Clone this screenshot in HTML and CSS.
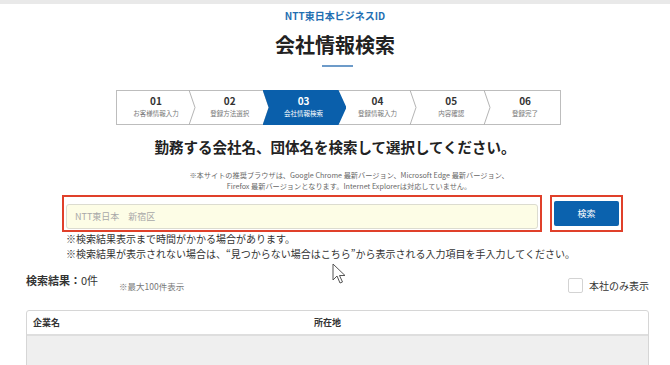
FILE: index.html
```html
<!DOCTYPE html>
<html lang="ja">
<head>
    <meta charset="UTF-8">
    <meta name="viewport" content="width=device-width, initial-scale=1.0">
    <title>会社情報検索</title>
    <link rel="stylesheet" href="styles.css">
</head>
<body>
    <div class="topbar"></div>

    <div class="brand">NTT東日本ビジネスID</div>
    <h1 class="title">会社情報検索</h1>
    <div class="rule"></div>

    <!-- ステップ表示 -->
    <div class="steps">
        <div class="step">
            <div class="num">01</div><div class="label">お客様情報入力</div>
            <svg class="sep" viewBox="0 0 6 35" preserveAspectRatio="none"><polyline points="0,0 6,17.5 0,35"/></svg>
        </div>
        <div class="step">
            <div class="num">02</div><div class="label">登録方法選択</div>
            <svg class="sep" viewBox="0 0 6 35" preserveAspectRatio="none"><polyline points="0,0 6,17.5 0,35"/></svg>
        </div>
        <div class="step active">
            <div class="num">03</div><div class="label">会社情報検索</div>
        </div>
        <div class="step">
            <div class="num">04</div><div class="label">登録情報入力</div>
            <svg class="sep" viewBox="0 0 6 35" preserveAspectRatio="none"><polyline points="0,0 6,17.5 0,35"/></svg>
        </div>
        <div class="step">
            <div class="num">05</div><div class="label">内容確認</div>
            <svg class="sep" viewBox="0 0 6 35" preserveAspectRatio="none"><polyline points="0,0 6,17.5 0,35"/></svg>
        </div>
        <div class="step">
            <div class="num">06</div><div class="label">登録完了</div>
        </div>
    </div>

    <h2 class="lead">勤務する会社名、団体名を検索して選択してください。</h2>
    <p class="browser-note">※本サイトの推奨ブラウザは、Google Chrome 最新バージョン、Microsoft Edge 最新バージョン、<br>Firefox 最新バージョンとなります。Internet Explorerは対応していません。</p>

    <!-- 検索フォーム -->
    <div class="search-row">
        <div class="mark mark-input">
            <input class="search-input" type="text" placeholder="NTT東日本　新宿区">
        </div>
        <div class="mark mark-btn">
            <button class="search-btn">検索</button>
        </div>
    </div>
    <div class="search-notes">
        <p>※検索結果表示まで時間がかかる場合があります。</p>
        <p>※検索結果が表示されない場合は、“見つからない場合は<span class="link">こちら</span>”から表示される入力項目を手入力してください。</p>
    </div>

    <div class="results">
        <div class="results-head">
            <div class="count"><b>検索結果：</b>0件</div>
            <div class="max">※最大100件表示</div>
            <label class="only-hq"><span class="checkbox"></span>本社のみ表示</label>
        </div>
        <div class="table">
            <div class="table-head">
                <div class="col-name">企業名</div>
                <div class="col-addr">所在地</div>
            </div>
            <div class="table-body"></div>
        </div>
    </div>

    <!-- マウスカーソル -->
    <svg class="cursor" width="14" height="22" viewBox="0 0 14 22">
        <path d="M1 1 L1 17 L5 13 L8 20 L10.5 19 L7.5 12.5 L13 12.5 Z" fill="#fff" stroke="#555" stroke-width="1" stroke-linejoin="round"/>
    </svg>
</body>
</html>
```

FILE: styles.css
```css
body {
    margin: 0;
    font-family: "Noto Sans CJK JP", "Noto Sans", sans-serif;
    color: #333;
    background-color: #fff;
    position: relative;
    overflow: hidden;
}
p {
    margin: 0;
}
.topbar {
    height: 4px;
    background-color: #e9e9e9;
}
.brand {
    margin-top: 5px;
    text-align: center;
    font-size: 10px;
    line-height: 14px;
    font-weight: bold;
    color: #1f6fb2;
}
.title {
    margin: 8px 0 0;
    text-align: center;
    font-size: 20px;
    line-height: 28px;
    font-weight: bold;
    color: #222;
}
.rule {
    width: 31px;
    height: 2px;
    margin: 6px 0 0 322px;
    background-color: #6d9bc9;
}

/* steps */
.steps {
    display: flex;
    width: 445px;
    height: 35px;
    margin: 23px 0 0 116px;
    border: 1px solid #bdbdbd;
    box-sizing: border-box;
}
.step {
    flex: 1;
    position: relative;
    text-align: center;
    padding-left: 4px;
}
.num {
    position: relative;
    z-index: 2;
    margin-top: 4px;
    font-size: 10px;
    line-height: 12px;
    font-weight: bold;
    color: #333;
}
.label {
    position: relative;
    z-index: 2;
    font-size: 6.5px;
    line-height: 12px;
    color: #777;
}
.sep {
    position: absolute;
    top: -1px;
    right: -4px;
    width: 6px;
    height: 35px;
    overflow: visible;
    z-index: 1;
}
.sep polyline {
    fill: none;
    stroke: #b5b5b5;
    stroke-width: 1;
}
.step.active::before {
    content: "";
    position: absolute;
    top: -1px;
    bottom: -1px;
    left: -2px;
    right: -8px;
    background-color: #0a5fab;
    clip-path: polygon(0 0, calc(100% - 8px) 0, 100% 50%, calc(100% - 8px) 100%, 0 100%, 6px 50%);
    z-index: 1;
}
.step.active .num,
.step.active .label {
    color: #fff;
}

.lead {
    margin: 12px 0 0;
    text-align: center;
    font-size: 14.5px;
    line-height: 20px;
    font-weight: bold;
    color: #222;
}
.browser-note {
    margin-top: 13px;
    padding-left: 28px;
    text-align: center;
    font-size: 7.2px;
    line-height: 11px;
    color: #666;
}

/* search */
.search-row {
    display: flex;
    gap: 8px;
    margin: 3px 0 0 62px;
}
.mark {
    border: 2px solid #e0402a;
    box-sizing: border-box;
    height: 37px;
    padding: 4px 2px;
}
.mark-input {
    width: 480px;
}
.mark-btn {
    width: 73px;
    padding-top: 4px;
}
.search-input {
    width: 100%;
    height: 25px;
    box-sizing: border-box;
    border: 1px solid #dcdcd0;
    border-radius: 3px;
    background-color: #fdfde6;
    padding: 0 8px;
    font-family: inherit;
    font-size: 9px;
    outline: none;
}
.search-input::placeholder {
    color: #a8a8a8;
}
.search-btn {
    display: block;
    width: 65px;
    height: 25px;
    margin: 0 auto;
    border: none;
    border-radius: 2px;
    background-color: #0b62ae;
    color: #fff;
    font-family: inherit;
    font-size: 9px;
}
.search-notes {
    margin-left: 66px;
    font-size: 10px;
    line-height: 14.5px;
    color: #333;
}

/* results */
.results {
    padding: 0 21px 0 26px;
}
.results-head {
    display: flex;
    align-items: flex-start;
    height: 20px;
    margin-top: 11px;
}
.count {
    font-size: 11px;
    line-height: 16px;
}
.max {
    margin: 8px 0 0 21px;
    font-size: 8.5px;
    line-height: 12px;
    color: #777;
}
.only-hq {
    display: flex;
    align-items: center;
    gap: 6px;
    margin: 6px 0 0 auto;
    font-size: 10px;
    line-height: 14px;
}
.checkbox {
    width: 13px;
    height: 13px;
    border: 1px solid #d3d3d3;
    border-radius: 2px;
    background-color: #fff;
}
.table {
    margin-top: 18px;
    border: 1px solid #d6d6d6;
    border-radius: 3px;
}
.table-head {
    display: flex;
    height: 23px;
    align-items: center;
    padding-left: 6px;
    border-bottom: 2px solid #dedede;
    font-size: 9px;
    font-weight: bold;
}
.col-name {
    width: 281px;
}
.table-body {
    height: 60px;
    background-color: #efefef;
}
.cursor {
    position: absolute;
    left: 332px;
    top: 263px;
}
```
